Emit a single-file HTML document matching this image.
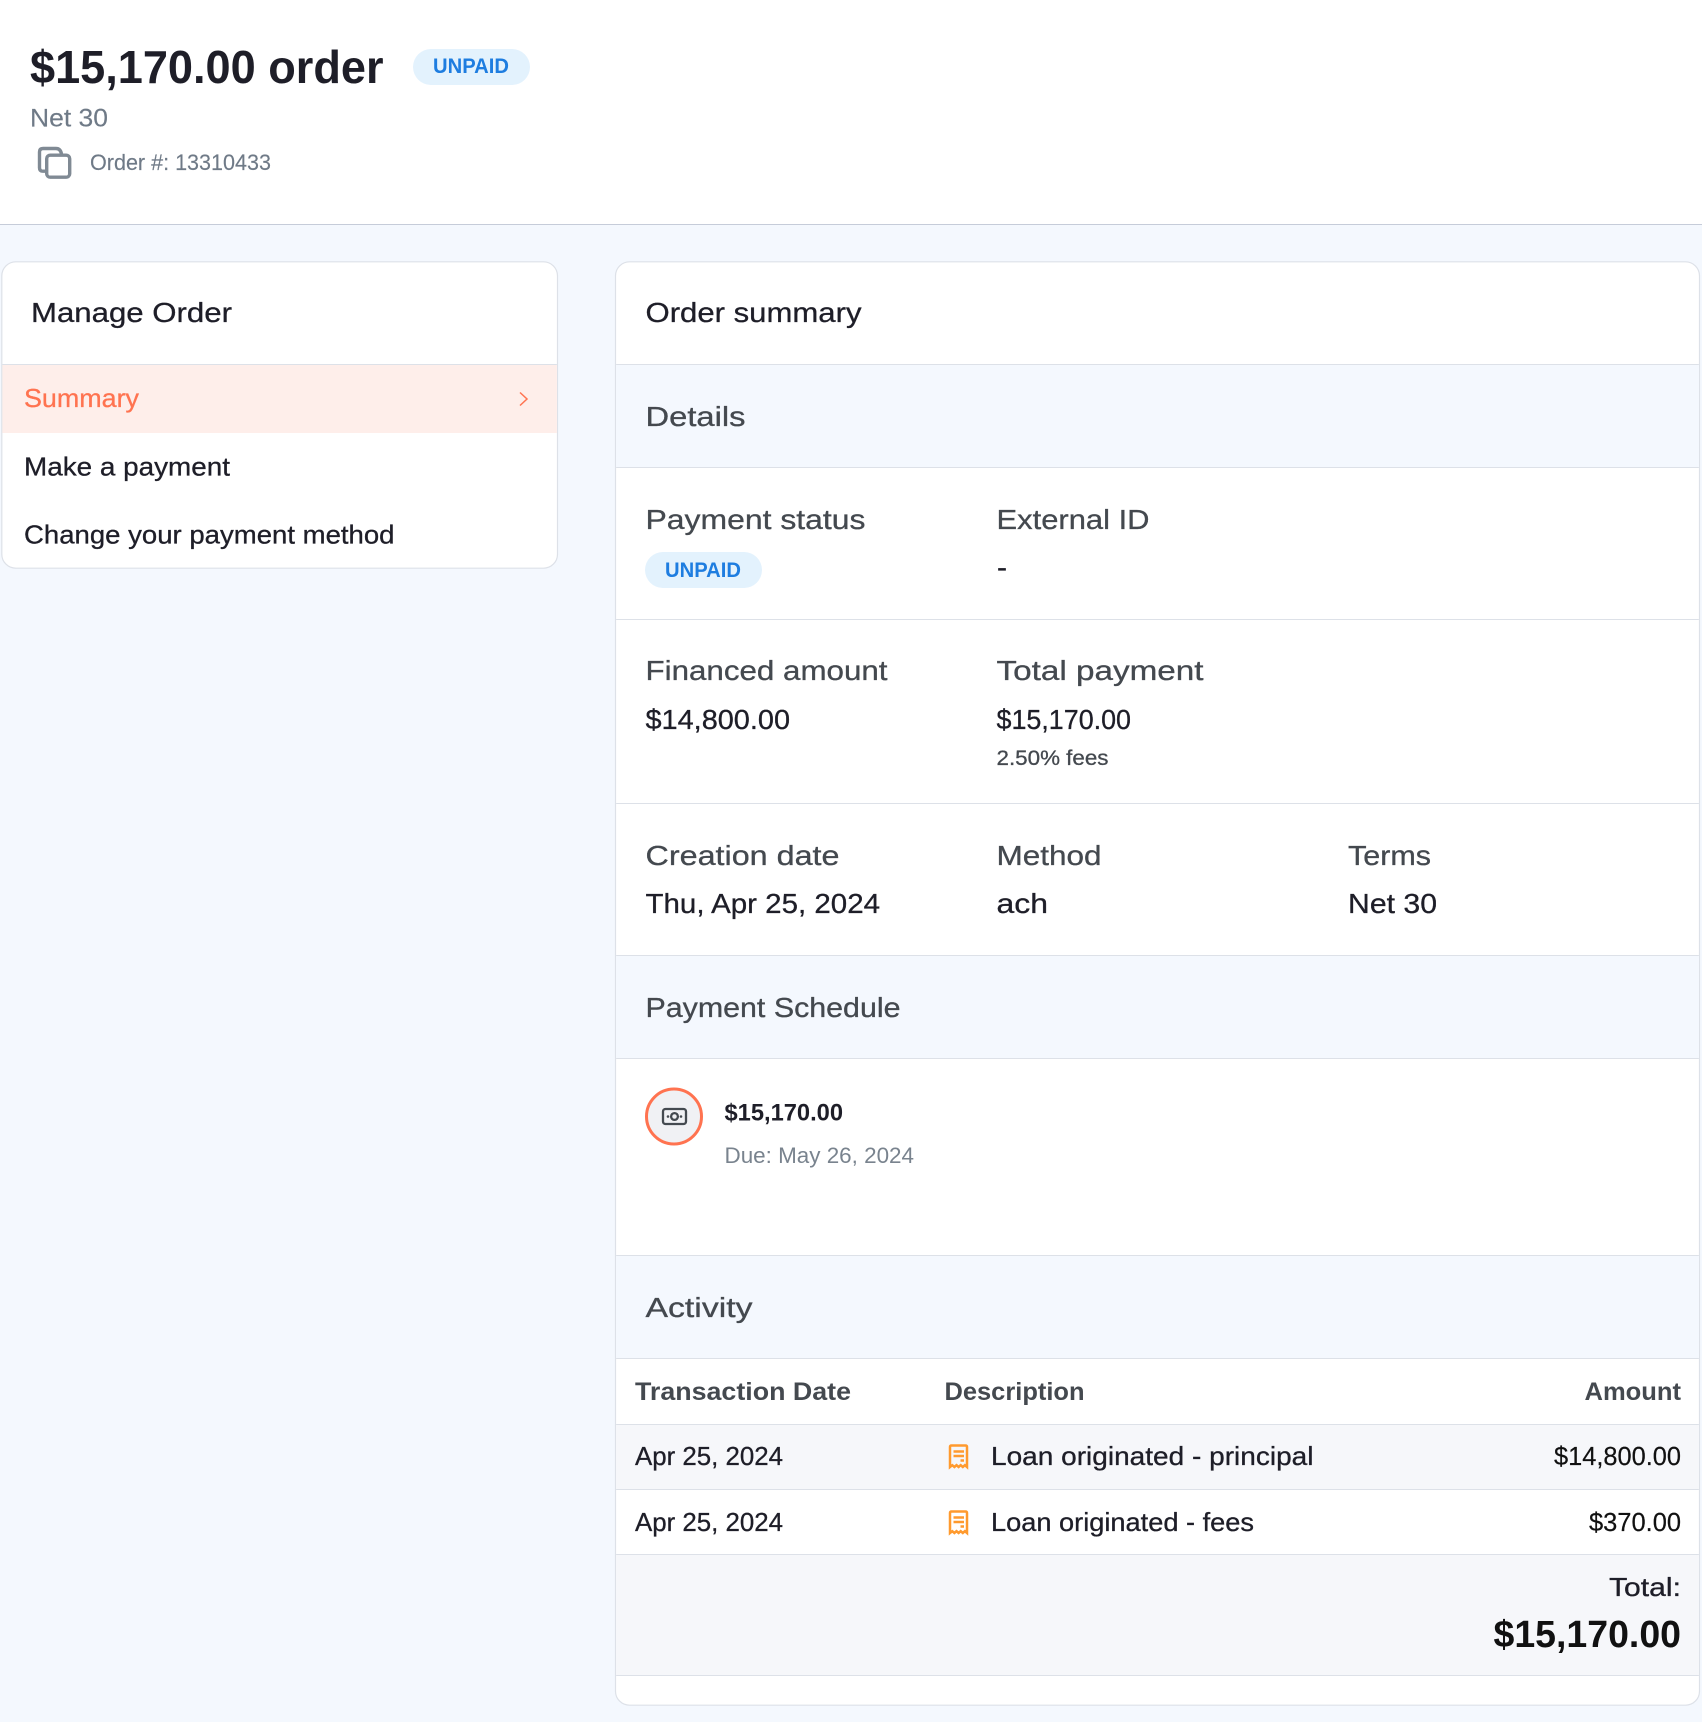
<!DOCTYPE html>
<html lang="en">
<head>
<meta charset="utf-8">
<title>Order</title>
<style>
html,body{margin:0;padding:0;width:1702px;height:1722px;overflow:hidden;background:#f4f8fe}
svg{display:block;position:absolute;left:0;top:0}
text{font-family:"Liberation Sans",Arial,sans-serif;white-space:pre}
.d{fill:#1e1e28;stroke:#1e1e28;stroke-width:.3px}
.g{fill:#44494f;stroke:#44494f;stroke-width:.3px}
.m{fill:#6f7a87;stroke:#6f7a87;stroke-width:.15px}
.b{font-weight:700;stroke-width:0}
.f26{font-size:26px}.f27{font-size:27px}.f28{font-size:28px}
</style>
</head>
<body>
<svg width="1702" height="1722" viewBox="0 0 1702 1722" xmlns="http://www.w3.org/2000/svg">
<rect width="1702" height="1722" fill="#f4f8fe"/>
<!-- header -->
<rect width="1702" height="224" fill="#fff"/>
<rect y="224" width="1702" height="1" fill="#c6ccd9"/>
<text x="30" y="83" font-size="46" font-weight="700" fill="#1e1e28" textLength="353.500" lengthAdjust="spacingAndGlyphs">$15,170.00 order</text>
<rect x="413" y="49" width="117" height="36" rx="18" fill="#e3f2fd"/>
<text x="433" y="73" font-size="21" font-weight="700" fill="#1e7de0" textLength="76" lengthAdjust="spacingAndGlyphs">UNPAID</text>
<text x="30" y="126.500" font-size="25" class="m" textLength="78" lengthAdjust="spacingAndGlyphs">Net 30</text>
<g fill="none" stroke="#808a94" stroke-width="3.400">
<rect x="46.700" y="155.200" width="23" height="22" rx="3.500"/>
<path d="M45 171.200h-2q-3.500 0-3.500-3.500V152q0-3.500 3.500-3.500h13q4.500 0 5.500 5.500"/>
</g>
<text x="90" y="170" font-size="22" class="m" textLength="181" lengthAdjust="spacingAndGlyphs">Order #: 13310433</text>

<!-- left card -->
<rect x="1.800" y="261.800" width="555.700" height="306.400" rx="14" fill="#fff" stroke="#dde1e8" stroke-width="1.200"/>
<rect x="2.400" y="364" width="554.500" height="1" fill="#dde1e8"/>
<rect x="2.400" y="365" width="554.500" height="68" fill="#feeeea"/>
<text x="31" y="322" class="d f28" textLength="201" lengthAdjust="spacingAndGlyphs">Manage Order</text>
<text x="24" y="407" class="f26" fill="#ff7350" stroke="#ff7350" stroke-width=".3" textLength="115" lengthAdjust="spacingAndGlyphs">Summary</text>
<path d="M520 392.500l7 6.500-7 6.500" fill="none" stroke="#ff7350" stroke-width="1.500"/>
<text x="24" y="475.300" class="d f26" textLength="206" lengthAdjust="spacingAndGlyphs">Make a payment</text>
<text x="24" y="543.300" class="d f26" textLength="370.500" lengthAdjust="spacingAndGlyphs">Change your payment method</text>

<!-- right card -->
<rect x="615.500" y="261.800" width="1084" height="1443.400" rx="14" fill="#fff" stroke="#dde1e8" stroke-width="1.200"/>
<g fill="#f4f8fe">
<rect x="616.100" y="365" width="1082.800" height="102"/>
<rect x="616.100" y="956" width="1082.800" height="102"/>
<rect x="616.100" y="1256" width="1082.800" height="102"/>
</g>
<g fill="#f6f7fa">
<rect x="616.100" y="1425" width="1082.800" height="64"/>
<rect x="616.100" y="1555" width="1082.800" height="120"/>
</g>
<g fill="#dde1e8">
<rect x="616.100" y="364" width="1082.800" height="1"/>
<rect x="616.100" y="467" width="1082.800" height="1"/>
<rect x="616.100" y="619" width="1082.800" height="1"/>
<rect x="616.100" y="803" width="1082.800" height="1"/>
<rect x="616.100" y="955" width="1082.800" height="1"/>
<rect x="616.100" y="1058" width="1082.800" height="1"/>
<rect x="616.100" y="1255" width="1082.800" height="1"/>
<rect x="616.100" y="1358" width="1082.800" height="1"/>
<rect x="616.100" y="1424" width="1082.800" height="1"/>
<rect x="616.100" y="1489" width="1082.800" height="1"/>
<rect x="616.100" y="1554" width="1082.800" height="1"/>
<rect x="616.100" y="1675" width="1082.800" height="1"/>
</g>

<text x="645.500" y="322" class="d f28" textLength="216" lengthAdjust="spacingAndGlyphs">Order summary</text>
<text x="645.500" y="426" class="g f28" textLength="100" lengthAdjust="spacingAndGlyphs">Details</text>

<text x="645.500" y="529" class="g f28" textLength="220" lengthAdjust="spacingAndGlyphs">Payment status</text>
<text x="996.500" y="529" class="g f28" textLength="153" lengthAdjust="spacingAndGlyphs">External ID</text>
<rect x="645" y="552" width="117" height="36" rx="18" fill="#e3f2fd"/>
<text x="665" y="577" font-size="21" font-weight="700" fill="#1e7de0" textLength="76" lengthAdjust="spacingAndGlyphs">UNPAID</text>
<text x="997" y="577" class="d f28" textLength="10" lengthAdjust="spacingAndGlyphs">-</text>

<text x="645.500" y="680" class="g f28" textLength="242" lengthAdjust="spacingAndGlyphs">Financed amount</text>
<text x="996.500" y="680" class="g f28" textLength="207" lengthAdjust="spacingAndGlyphs">Total payment</text>
<text x="645.500" y="729" class="d f28" textLength="144.500" lengthAdjust="spacingAndGlyphs">$14,800.00</text>
<text x="996.500" y="729" class="d f28" textLength="134.500" lengthAdjust="spacingAndGlyphs">$15,170.00</text>
<text x="996.500" y="765" font-size="21" class="g" textLength="112" lengthAdjust="spacingAndGlyphs">2.50% fees</text>

<text x="645.500" y="865" class="g f28" textLength="194" lengthAdjust="spacingAndGlyphs">Creation date</text>
<text x="996.500" y="865" class="g f28" textLength="105" lengthAdjust="spacingAndGlyphs">Method</text>
<text x="1348" y="865" class="g f28" textLength="83" lengthAdjust="spacingAndGlyphs">Terms</text>
<text x="645.500" y="913" class="d f28" textLength="234.500" lengthAdjust="spacingAndGlyphs">Thu, Apr 25, 2024</text>
<text x="996.500" y="913" class="d f28" textLength="51.500" lengthAdjust="spacingAndGlyphs">ach</text>
<text x="1348" y="913" class="d f28" textLength="89" lengthAdjust="spacingAndGlyphs">Net 30</text>

<text x="645.500" y="1017" class="g f28" textLength="255" lengthAdjust="spacingAndGlyphs">Payment Schedule</text>
<circle cx="674" cy="1116.500" r="27.500" fill="#f0f1f4" stroke="#ff7350" stroke-width="3"/>
<g fill="none" stroke="#444a50" stroke-width="2.300">
<rect x="663" y="1109" width="23" height="15" rx="2.500"/>
<circle cx="674.500" cy="1116.500" r="3.400"/>
</g>
<circle cx="668" cy="1116.500" r="1.300" fill="#444a50"/>
<circle cx="681" cy="1116.500" r="1.300" fill="#444a50"/>
<text x="724.500" y="1120.500" font-size="24" class="d b" textLength="118.500" lengthAdjust="spacingAndGlyphs">$15,170.00</text>
<text x="724.500" y="1163" font-size="22" fill="#79838e" textLength="189.500" lengthAdjust="spacingAndGlyphs">Due: May 26, 2024</text>

<text x="645.500" y="1317" class="g f28" textLength="107" lengthAdjust="spacingAndGlyphs">Activity</text>
<text x="635" y="1400" font-size="25" class="g b" textLength="216" lengthAdjust="spacingAndGlyphs">Transaction Date</text>
<text x="944.500" y="1400" font-size="25" class="g b" textLength="140" lengthAdjust="spacingAndGlyphs">Description</text>
<text x="1584.500" y="1400" font-size="25" class="g b" textLength="96.500" lengthAdjust="spacingAndGlyphs">Amount</text>

<text x="635" y="1465" class="d f26" textLength="148" lengthAdjust="spacingAndGlyphs">Apr 25, 2024</text>
<text x="635" y="1531" class="d f26" textLength="148" lengthAdjust="spacingAndGlyphs">Apr 25, 2024</text>
<g fill="none" stroke="#ff9a2e" stroke-width="2.500">
<path d="M950 1467v-20q0-1.500 1.500-1.500h14q1.500 0 1.500 1.500v20l-2.100-1.800-2.100 1.800-2.100-1.800-2.100 1.800-2.100-1.800-2.100 1.800-2.100-1.800z"/>
<path d="M953.500 1451.500h10.500M953.500 1456h10.500M960.500 1460.500h3.500"/>
</g>
<g transform="translate(0,66)" fill="none" stroke="#ff9a2e" stroke-width="2.500">
<path d="M950 1467v-20q0-1.500 1.500-1.500h14q1.500 0 1.500 1.500v20l-2.100-1.800-2.100 1.800-2.100-1.800-2.100 1.800-2.100-1.800-2.100 1.800-2.100-1.800z"/>
<path d="M953.500 1451.500h10.500M953.500 1456h10.500M960.500 1460.500h3.500"/>
</g>
<text x="991" y="1465" class="d f26" textLength="322.500" lengthAdjust="spacingAndGlyphs">Loan originated - principal</text>
<text x="991" y="1531" class="d f26" textLength="263" lengthAdjust="spacingAndGlyphs">Loan originated - fees</text>
<text x="1554" y="1465" font-size="26" fill="#111" stroke="#111" stroke-width=".2" textLength="127" lengthAdjust="spacingAndGlyphs">$14,800.00</text>
<text x="1589" y="1531" font-size="26" fill="#111" stroke="#111" stroke-width=".2" textLength="92" lengthAdjust="spacingAndGlyphs">$370.00</text>
<text x="1609" y="1596" class="d f26" textLength="72" lengthAdjust="spacingAndGlyphs">Total:</text>
<text x="1493.500" y="1647" font-size="38" font-weight="700" fill="#111" textLength="187.500" lengthAdjust="spacingAndGlyphs">$15,170.00</text>
</svg>
</body>
</html>
